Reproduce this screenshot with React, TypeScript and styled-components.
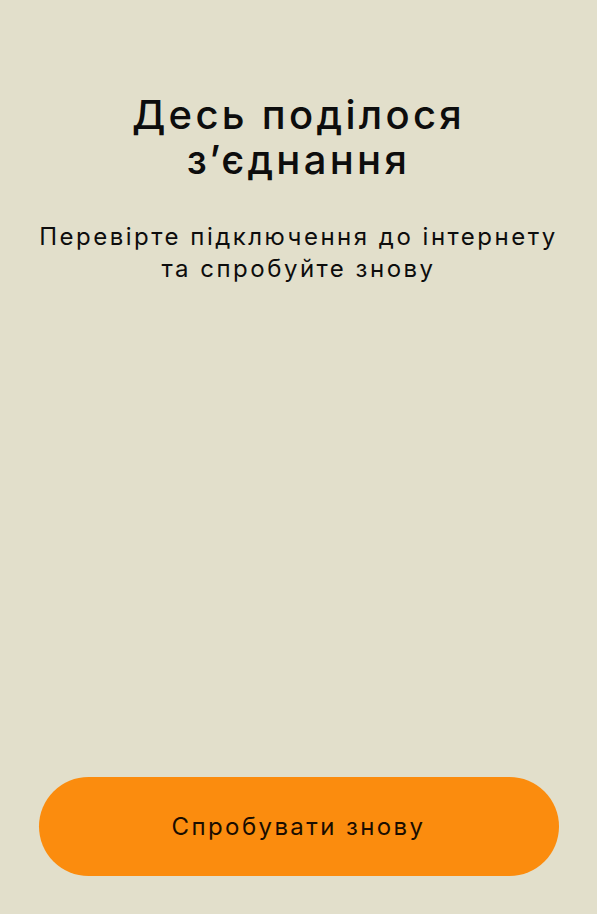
import React from "react";
import styled, { createGlobalStyle } from "styled-components";

const Global = createGlobalStyle`
  html, body { margin: 0; padding: 0; background: #e2dfcb; }
  body { font-family: Inter, "Noto Sans", sans-serif; color: #0d0d0d; }
  * { box-sizing: border-box; }
`;

const Screen = styled.div`
  width: 597px;
  height: 914px;
  background: #e2dfcb;
  display: flex;
  flex-direction: column;
  align-items: center;
  padding: 92px 38px 38px;
`;

const Title = styled.h1`
  margin: 0;
  font-size: 40px;
  line-height: 45px;
  font-weight: 500;
  text-align: center;
  letter-spacing: 3.3px;
  white-space: nowrap;
`;

const Subtitle = styled.p`
  margin: 39px 0 0;
  font-size: 24px;
  line-height: 32px;
  font-weight: 400;
  text-align: center;
  letter-spacing: 2.5px;
  white-space: nowrap;
`;

const Spacer = styled.div`
  flex: 1;
`;

const RetryButton = styled.button`
  width: 520px;
  height: 99px;
  flex-shrink: 0;
  border: none;
  border-radius: 50px;
  background: #fb8c0e;
  color: #1a0d00;
  font-family: Inter, "Noto Sans", sans-serif;
  font-size: 24px;
  font-weight: 400;
  letter-spacing: 2.4px;
  cursor: pointer;
`;

export default function App() {
  return (
    <>
      <Global />
      <Screen>
        <Title>
          Десь поділося
          <br />
          з’єднання
        </Title>
        <Subtitle>
          Перевірте підключення до інтернету
          <br />
          та спробуйте знову
        </Subtitle>
        <Spacer />
        <RetryButton>Спробувати знову</RetryButton>
      </Screen>
    </>
  );
}
